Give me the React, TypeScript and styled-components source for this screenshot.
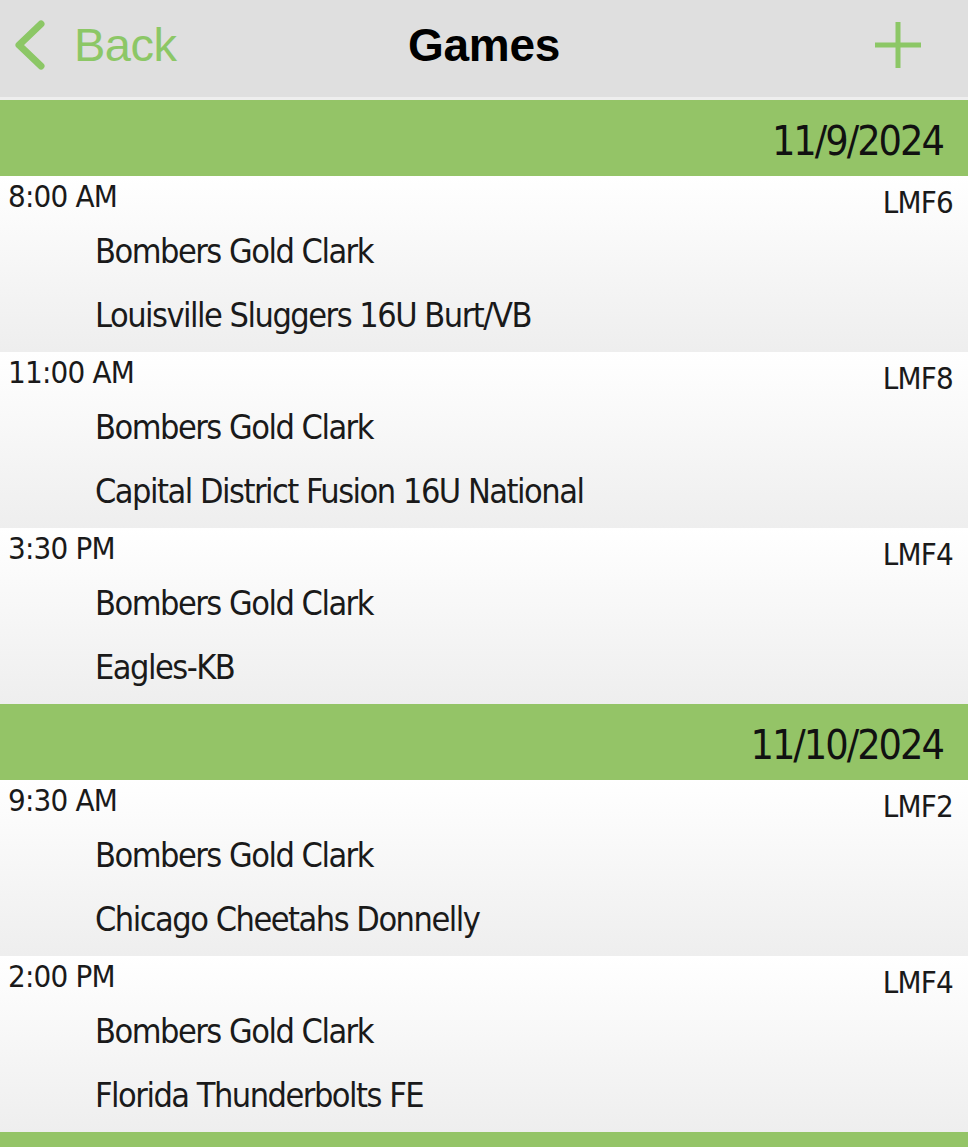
import React from "react";
import styled, { createGlobalStyle } from "styled-components";

const Global = createGlobalStyle`
  html, body { margin: 0; padding: 0; background: #ffffff; }
  body { width: 968px; overflow: hidden; font-family: "DejaVu Sans Condensed", "DejaVu Sans", sans-serif; }
`;

const Screen = styled.div`
  width: 968px;
  height: 1147px;
  overflow: hidden;
  display: flex;
  flex-direction: column;
  background: #ffffff;
`;

const NavBar = styled.header`
  height: 100px;
  flex: none;
  box-sizing: border-box;
  padding-bottom: 8px;
  display: grid;
  grid-template-columns: 1fr auto 1fr;
  align-items: center;
  background: #dfdfdf;
  border-bottom: 3px solid #eeeeee;
  font-family: "Liberation Sans", Arial, sans-serif;
`;

const BackButton = styled.div`
  display: flex;
  align-items: center;
  gap: 28px;
  padding-left: 12px;
  color: #8cc766;
  font-size: 47px;
  letter-spacing: -0.5px;
`;

const Title = styled.div`
  font-size: 46px;
  font-weight: 700;
  color: #000000;
  letter-spacing: -0.3px;
`;

const AddButton = styled.div`
  justify-self: end;
  padding-right: 45px;
  display: flex;
  align-items: center;
`;

const DateHeader = styled.div`
  height: 76px;
  flex: none;
  box-sizing: border-box;
  padding: 6px 25px 0 0;
  display: flex;
  align-items: center;
  justify-content: flex-end;
  background: #94c467;
  color: #111111;
  font-size: 41px;
  letter-spacing: -2px;
`;

const GameRow = styled.div`
  height: 176px;
  flex: none;
  box-sizing: border-box;
  padding: 4px 15px 0 8px;
  background: linear-gradient(#ffffff, #eeeeee);
  color: #1a1a1a;
  display: flex;
  flex-direction: column;
`;

const TopLine = styled.div`
  display: flex;
  justify-content: space-between;
  align-items: flex-start;
  font-size: 31px;
  line-height: 33px;
  letter-spacing: -0.8px;
`;

const Court = styled.span`
  padding-top: 6px;
`;

const Team = styled.div`
  padding-left: 87px;
  font-size: 34px;
  line-height: 64px;
  letter-spacing: -1.5px;
`;

const BottomBar = styled.div`
  height: 20px;
  flex: none;
  background: #94c467;
`;

type Game = { time: string; court: string; home: string; away: string };
type Day = { date: string; games: Game[] };

const days: Day[] = [
  {
    date: "11/9/2024",
    games: [
      { time: "8:00 AM", court: "LMF6", home: "Bombers Gold Clark", away: "Louisville Sluggers 16U Burt/VB" },
      { time: "11:00 AM", court: "LMF8", home: "Bombers Gold Clark", away: "Capital District Fusion 16U National" },
      { time: "3:30 PM", court: "LMF4", home: "Bombers Gold Clark", away: "Eagles-KB" },
    ],
  },
  {
    date: "11/10/2024",
    games: [
      { time: "9:30 AM", court: "LMF2", home: "Bombers Gold Clark", away: "Chicago Cheetahs Donnelly" },
      { time: "2:00 PM", court: "LMF4", home: "Bombers Gold Clark", away: "Florida Thunderbolts FE" },
    ],
  },
];

const Chevron = () => (
  <svg width="34" height="50" viewBox="0 0 34 50" fill="none">
    <path d="M29 4 L7 25 L29 46" stroke="#8cc766" strokeWidth="7" strokeLinecap="round" strokeLinejoin="round" />
  </svg>
);

const Plus = () => (
  <svg width="50" height="50" viewBox="0 0 50 50" fill="none">
    <path d="M25 2 V48 M2 25 H48" stroke="#8cc766" strokeWidth="5" />
  </svg>
);

export default function App() {
  return (
    <>
      <Global />
      <Screen>
        <NavBar>
          <BackButton>
            <Chevron />
            <span>Back</span>
          </BackButton>
          <Title>Games</Title>
          <AddButton>
            <Plus />
          </AddButton>
        </NavBar>
        {days.map((d) => (
          <React.Fragment key={d.date}>
            <DateHeader>{d.date}</DateHeader>
            {d.games.map((g) => (
              <GameRow key={g.time}>
                <TopLine>
                  <span>{g.time}</span>
                  <Court>{g.court}</Court>
                </TopLine>
                <Team>{g.home}</Team>
                <Team>{g.away}</Team>
              </GameRow>
            ))}
          </React.Fragment>
        ))}
        <BottomBar />
      </Screen>
    </>
  );
}
